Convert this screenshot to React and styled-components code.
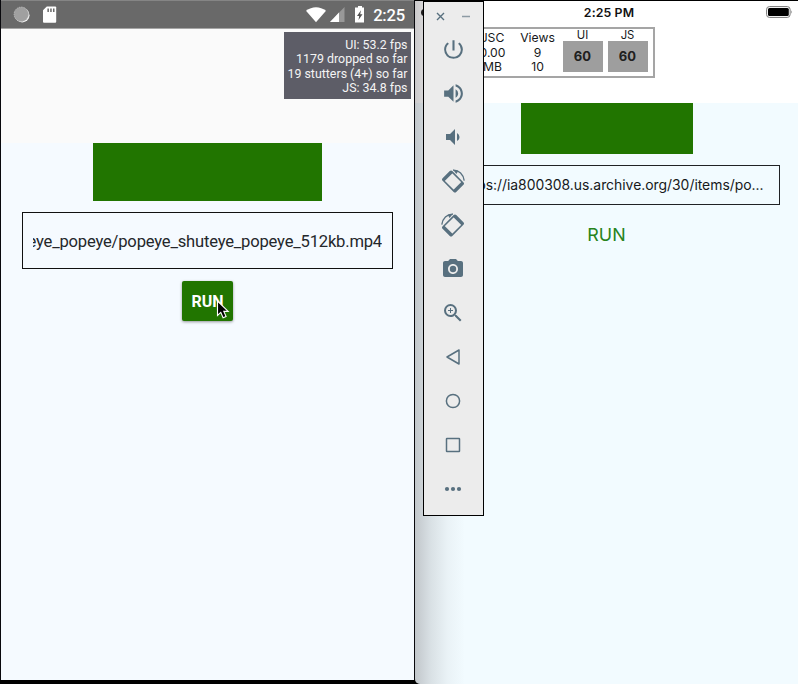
import React from "react";
import styled, { createGlobalStyle } from "styled-components";
import { MdPowerSettingsNew, MdVolumeUp, MdVolumeDown, MdPhotoCamera, MdZoomIn } from "react-icons/md";

const GlobalStyle = createGlobalStyle`
  * { box-sizing: border-box; }
  body { margin: 0; background: #000; overflow: hidden; }
`;

const Desktop = styled.div`
  position: relative;
  display: grid;
  grid-template-columns: 415px 383px;
  width: 798px;
  height: 684px;
  overflow: hidden;
  background: #000;
`;

const AndroidPhone = styled.section`
  display: flex;
  flex-direction: column;
  height: 680px;
  border: solid #08080c;
  border-width: 0 1px;
  background: #f5faff;
  font-family: Roboto, sans-serif;
  color: #24272b;
`;

const AndroidStatus = styled.header`
  display: flex;
  align-items: center;
  justify-content: space-between;
  height: 29px;
  flex: none;
  padding: 1px 9px 0 12px;
  background: #696969;
  border-top: 1px solid #858585;
  border-bottom: 1px solid #a5a5a5;
  color: #fff;
`;

const StatusGroup = styled.div`
  display: flex;
  align-items: center;
`;

const AndroidClock = styled.span`
  font-size: 16.6px;
  font-weight: 500;
  line-height: 20px;
  margin-left: 5px;
  padding-top: 1px;
  letter-spacing: -0.2px;
`;

const AndroidHeader = styled.div`
  display: flex;
  justify-content: flex-end;
  align-items: flex-start;
  height: 114px;
  flex: none;
  padding: 3px 3px 0 0;
  background: #fafafa;
`;

const FpsMonitor = styled.div`
  width: 127px;
  height: 67px;
  padding: 6px 3.5px 0 0;
  background: #5d5d67;
  color: #f4f4f4;
  font-size: 12.4px;
  line-height: 14.4px;
  text-align: right;
  white-space: nowrap;
`;

const Content = styled.div`
  display: flex;
  flex-direction: column;
  align-items: center;
`;

const Block = styled.div`
  width: ${(p) => p.$w}px;
  height: ${(p) => p.$h}px;
  background: #217500;
`;

const AndroidField = styled.div`
  width: 371px;
  height: 57px;
  margin-top: 11px;
  padding: 0 10px;
  border: 1px solid #101010;
  display: flex;
  align-items: center;
`;

const FieldText = styled.div`
  flex: 1;
  min-width: 0;
  display: flex;
  justify-content: flex-end;
  overflow: hidden;
  white-space: nowrap;
  font-size: 16.6px;
  letter-spacing: -0.2px;
  line-height: 26px;
  padding-top: 3px;
`;

const AndroidButton = styled.button`
  width: 51px;
  height: 40px;
  margin-top: 12px;
  padding: 1px 0 0;
  border: 0;
  border-radius: 2px;
  background: #217500;
  box-shadow: 0 1px 3px rgba(0, 0, 0, 0.4);
  color: #fff;
  font: 700 16px/20px Roboto, sans-serif;
`;

const IosPhone = styled.section`
  position: relative;
  display: flex;
  flex-direction: column;
  height: 684px;
  border-top: 1px solid #000;
  border-bottom-left-radius: 5px;
  overflow: hidden;
  background: #f2fbff;
  font-family: Inter, sans-serif;
  color: #17191b;
`;

const EdgeShadow = styled.div`
  position: absolute;
  inset: 0 auto 0 0;
  width: 50px;
  background: linear-gradient(90deg, rgba(75, 70, 75, 0.29), rgba(75, 75, 80, 0.15) 32%, rgba(75, 75, 80, 0.05) 65%, transparent);
`;

const IosTop = styled.div`
  height: 102px;
  flex: none;
  background: #fff;
`;

const IosStatus = styled.header`
  display: grid;
  grid-template-columns: 1fr auto 1fr;
  align-items: center;
  height: 22px;
  padding: 0 5px 0 6px;
  color: #111;
`;

const SignalDot = styled.span`
  width: 7px;
  height: 7px;
  border-radius: 50%;
  background: #111;
`;

const IosClock = styled.span`
  padding-left: 4px;
  font-size: 12.3px;
  font-weight: 600;
  letter-spacing: 0.13px;
`;

const BatterySlot = styled.span`
  display: flex;
  justify-content: flex-end;
`;

const PerfBox = styled.div`
  display: grid;
  grid-template-columns: repeat(4, 40px);
  column-gap: 5px;
  width: 200px;
  height: 51px;
  margin: 4px 0 0 40px;
  padding-left: 15.5px;
  border: 2px solid #a5a5a5;
  font-size: 12.2px;
  line-height: 14.5px;
  text-align: center;
`;

const PerfColumn = styled.div`
  display: flex;
  flex-direction: column;
  padding-top: 2px;
`;

const FpsColumn = styled.div`
  display: flex;
  flex-direction: column;
  align-items: center;
  width: 40px;
  font-size: 11.3px;
  line-height: 12px;
`;

const FpsTile = styled.div`
  width: 40px;
  height: 31px;
  background: #9e9e9e;
  color: #202020;
  font-size: 13px;
  font-weight: 700;
  line-height: 30px;
  letter-spacing: 0.2px;
`;

const IosField = styled.div`
  width: 346px;
  height: 40px;
  margin-top: 11px;
  padding: 0 15px 1px 10px;
  border: 1px solid #202224;
  display: flex;
  align-items: center;
  justify-content: flex-end;
  white-space: nowrap;
  font-size: 13.95px;
  letter-spacing: -0.03px;
`;

const IosButton = styled.button`
  margin-top: 18px;
  padding: 0;
  border: 0;
  background: none;
  color: #28841c;
  font: 400 17.9px/24px Inter, sans-serif;
`;

const ToolPanel = styled.aside`
  position: absolute;
  left: 423px;
  top: 1px;
  width: 61px;
  height: 515px;
  border: 1px solid #000;
  background: #ececec;
  color: #58707f;
`;

const WindowControls = styled.div`
  display: flex;
  justify-content: space-between;
  padding: 10px 13px 0 12px;
  height: 25px;
`;

const ToolList = styled.div`
  display: grid;
  grid-auto-rows: 44px;
  padding-right: 1px;
`;

const ToolButton = styled.button`
  display: flex;
  align-items: center;
  justify-content: center;
  padding: 0;
  border: 0;
  background: none;
  color: inherit;
`;

const Pointer = styled.svg`
  position: absolute;
  left: 216px;
  top: 300px;
`;

const RotateIcon = ({ flip }) => (
  <svg width="24" height="24" viewBox="0 0 24 24" fill="none" stroke="currentColor">
    <g transform={flip ? "translate(24 0) scale(-1 1)" : undefined}>
      <g transform="rotate(45 12 12.5)">
        <rect x="3.2" y="6.4" width="17.6" height="12.2" rx="1" strokeWidth="1.6" />
        <path d="M4.3 6.6v11.8M19.7 6.6v11.8" strokeWidth="3" />
      </g>
      <path d="M12 1.2C18 .9 22.5 5.4 23.2 11.6" strokeWidth="1.3" />
      <path d="M12 .8l5.2 1.2-1.8 3z" fill="currentColor" stroke="none" />
    </g>
  </svg>
);

const ShapeIcon = ({ children }) => (
  <svg width="24" height="24" viewBox="0 0 24 24" fill="none" stroke="currentColor" strokeWidth="1.5" strokeLinejoin="round">
    {children}
  </svg>
);

const tools = [
  ["Power", <MdPowerSettingsNew size={25} />],
  ["Volume up", <MdVolumeUp size={25} />],
  ["Volume down", <MdVolumeDown size={24} />],
  ["Rotate left", <RotateIcon />],
  ["Rotate right", <RotateIcon flip />],
  ["Screenshot", <MdPhotoCamera size={24} />],
  ["Zoom", <MdZoomIn size={24} />],
  ["Back", <ShapeIcon><path d="M6 12L18 5v14z" /></ShapeIcon>],
  ["Home", <ShapeIcon><circle cx="12" cy="12" r="6.6" /></ShapeIcon>],
  ["Overview", <ShapeIcon><rect x="5.5" y="5.5" width="13" height="13" rx="0.5" /></ShapeIcon>],
  ["More", <ShapeIcon><g fill="currentColor" stroke="none"><circle cx="6" cy="12" r="2.1" /><circle cx="12" cy="12" r="2.1" /><circle cx="18" cy="12" r="2.1" /></g></ShapeIcon>],
];

const SystemIcons = () => (
  <svg width="62" height="20" viewBox="0 0 62 20">
    <path d="M0 5.8C6 .9 14 .9 20 5.8L10 17.2z" fill="#fff" />
    <path d="M38.5 2v15H24z" fill="#989898" />
    <path d="M33 7.5V17h-9z" fill="#fff" />
    <path d="M50 2.4h2V1h4v1.4h2v15.1h-9V2.4z" fill="#fff" />
    <path d="M55 5.3l-4 5.6h2.2l-.7 4.2 4-5.8h-2.3z" fill="#505050" />
  </svg>
);

export default function App() {
  return (
    <>
      <GlobalStyle />
      <Desktop>
        <AndroidPhone>
          <AndroidStatus>
            <StatusGroup>
              <svg width="44" height="20" viewBox="0 0 44 20">
                <circle cx="9.2" cy="10.2" r="7.3" fill="#f5f5f5" />
                <circle cx="8.3" cy="9.3" r="7.2" fill="#a0a0a0" stroke="#bbb" strokeWidth="1" strokeDasharray="1.4 1" />
                <path d="M33.8 1.5h8.4q1 0 1 1v14.3q0 1-1 1H31q-1 0-1-1V5.3z" fill="#fff" />
                <path d="M34.4 3.4h1.5v3.5h-1.5zM37.2 3.4h1.5v3.5h-1.5zM40 3.4h1.5v3.5H40z" fill="#696969" />
              </svg>
            </StatusGroup>
            <StatusGroup>
              <SystemIcons />
              <AndroidClock>2:25</AndroidClock>
            </StatusGroup>
          </AndroidStatus>
          <AndroidHeader>
            <FpsMonitor>
              <div>UI: 53.2 fps</div>
              <div>1179 dropped so far</div>
              <div>19 stutters (4+) so far</div>
              <div>JS: 34.8 fps</div>
            </FpsMonitor>
          </AndroidHeader>
          <Content>
            <Block $w={229} $h={58} />
            <AndroidField>
              <FieldText>eye_popeye/popeye_shuteye_popeye_512kb.mp4</FieldText>
            </AndroidField>
            <AndroidButton>RUN</AndroidButton>
          </Content>
        </AndroidPhone>

        <IosPhone>
          <IosTop>
            <IosStatus>
              <SignalDot />
              <IosClock>2:25 PM</IosClock>
              <BatterySlot>
                <svg width="27" height="12" viewBox="0 0 27 12">
                  <rect x="0.6" y="0.6" width="23.5" height="10.8" rx="2.8" fill="#fff" stroke="#777" />
                  <rect x="2" y="2" width="20.8" height="8" rx="1.5" fill="#000" />
                  <path d="M25.3 4.2q1.5 1.8 0 3.6z" fill="#777" />
                </svg>
              </BatterySlot>
            </IosStatus>
            <PerfBox>
              <PerfColumn><span>JSC</span><span>0.00</span><span>MB</span></PerfColumn>
              <PerfColumn><span>Views</span><span>9</span><span>10</span></PerfColumn>
              <FpsColumn>UI<FpsTile>60</FpsTile></FpsColumn>
              <FpsColumn>JS<FpsTile>60</FpsTile></FpsColumn>
            </PerfBox>
          </IosTop>
          <Content>
            <Block $w={172} $h={51} />
            <IosField>https://ia800308.us.archive.org/30/items/po...</IosField>
            <IosButton>RUN</IosButton>
          </Content>
          <EdgeShadow />
        </IosPhone>

        <ToolPanel>
          <WindowControls>
            <svg width="9" height="9" viewBox="0 0 9 9" stroke="currentColor" strokeWidth="1.4"><path d="M1 1l7 7M8 1L1 8" /></svg>
            <svg width="8" height="9" viewBox="0 0 8 9" stroke="#8d9ba4" strokeWidth="1.5"><path d="M0 4.5h8" /></svg>
          </WindowControls>
          <ToolList>
            {tools.map(([name, icon]) => (
              <ToolButton key={name} aria-label={name}>{icon}</ToolButton>
            ))}
          </ToolList>
        </ToolPanel>

        <Pointer width="14" height="20" viewBox="0 0 14 20">
          <path d="M1.5 1v14.4l3.3-3 2.3 5.3 3-1.3-2.3-5h4.4z" fill="#000" stroke="#fff" strokeWidth="1.1" />
        </Pointer>
      </Desktop>
    </>
  );
}
